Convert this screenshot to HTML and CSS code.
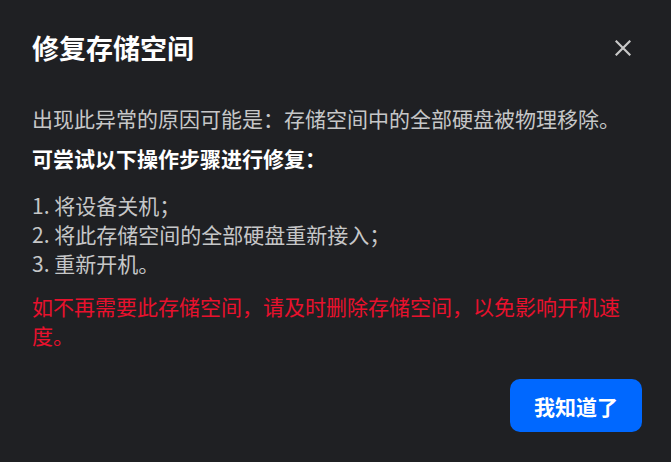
FILE: index.html
```html
<!DOCTYPE html>
<html lang="zh-CN">
<head>
    <meta charset="UTF-8">
    <meta name="viewport" content="width=device-width, initial-scale=1.0">
    <title>修复存储空间</title>
    <link rel="stylesheet" href="styles.css">
</head>
<body>
    <div class="dialog">
        <div class="dialog-header">
            <h2 class="dialog-title">修复存储空间</h2>
            <button class="close-btn" aria-label="关闭">
                <svg width="16" height="16" viewBox="0 0 16 16">
                    <path d="M1.5 1.5 L14.5 14.5 M14.5 1.5 L1.5 14.5" stroke="#c8c8c8" stroke-width="2.2" stroke-linecap="square" fill="none"/>
                </svg>
            </button>
        </div>

        <div class="dialog-body">
            <p class="reason">出现此异常的原因可能是：存储空间中的全部硬盘被物理移除。</p>
            <p class="steps-title">可尝试以下操作步骤进行修复：</p>
            <ol class="steps">
                <li>1. 将设备关机；</li>
                <li>2. 将此存储空间的全部硬盘重新接入；</li>
                <li>3. 重新开机。</li>
            </ol>
            <p class="warning">如不再需要此存储空间，请及时删除存储空间，以免影响开机速度。</p>
        </div>

        <div class="dialog-footer">
            <button class="ok-btn">我知道了</button>
        </div>
    </div>
</body>
</html>
```

FILE: styles.css
```css
body {
  font-family: "Noto Sans CJK SC", "Noto Sans", sans-serif;
  margin: 0;
  padding: 0;
  background-color: #1f2023;
}

.dialog {
  width: 671px;
  height: 462px;
  background-color: #1f2023;
  display: flex;
  flex-direction: column;
}

.dialog-header {
  display: flex;
  justify-content: space-between;
  align-items: center;
  padding: 30px 40px 0 32px;
}

.dialog-title {
  margin: 0;
  font-size: 27px;
  line-height: 36px;
  font-weight: 700;
  color: #fff;
}

.close-btn {
  background: none;
  border: none;
  padding: 0;
  width: 16px;
  height: 16px;
  cursor: pointer;
  display: flex;
}

.dialog-body {
  padding: 38px 32px 0 32px;
  font-size: 21px;
  line-height: 29px;
  color: #c6c7c8;
}

.dialog-body p {
  margin: 0;
}

.reason {
  margin-bottom: 11px !important;
}

.steps-title {
  font-weight: 700;
  color: #fff;
  margin-bottom: 18px !important;
}

.steps {
  list-style: none;
  margin: 0 0 14px 0;
  padding: 0;
}

.warning {
  color: #e8112d;
}

.dialog-footer {
  display: flex;
  justify-content: flex-end;
  padding: 29px 29px 29px 32px;
}

.ok-btn {
  width: 132px;
  height: 53px;
  background-color: #0068ff;
  color: #fff;
  border: none;
  border-radius: 10px;
  font-family: inherit;
  font-size: 21px;
  font-weight: 700;
  cursor: pointer;
}
```
